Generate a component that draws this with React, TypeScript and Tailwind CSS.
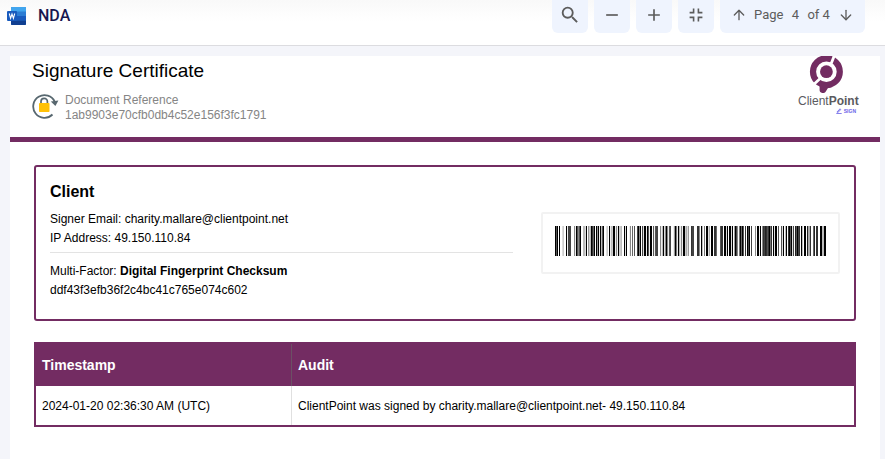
import { ArrowDown, ArrowUp } from "lucide-react";
import { MdAdd, MdRemove, MdSearch } from "react-icons/md";

/* One hex digit per bar column: 0 is black, f is white */
const BARCODE = [
  "050f0ffdcff0e444fff8e05850ffbbd0f9cb0360",
  "f090e0b50ffdcf0ebc00e8e0ccbff0d0ffe8f6f5",
  "ff4080f4d00e05e00f5e544ff8eb0d808e54ffe9",
  "07e0be8e00cad9ff344fff338f0bf7f00daf00f",
  "336fff533f00d0f00d0f9048f70605f3f040f4ff",
  "f8f00e0f8342353073f0d00f5ff5d0fb0f3050d4",
  "f25043f0bf00f2aa3ff62f33ff00bb00",
].join("");

const AUDIT = [
  {
    timestamp: "2024-01-20 02:36:30 AM (UTC)",
    audit: "ClientPoint was signed by charity.mallare@clientpoint.net- 49.150.110.84",
  },
];

function WordIcon() {
  return (
    <svg className="h-[18px] w-5 shrink-0" viewBox="0 0 20 18" aria-hidden="true">
      <rect x="4" y="0" width="15" height="18" rx="1" fill="#2b7cd3" />
      <path d="M5 0h13a1 1 0 0 1 1 1v3.5H4V1a1 1 0 0 1 1-1z" fill="#41a5ee" />
      <rect x="4" y="9" width="15" height="4.5" fill="#185abd" />
      <path d="M4 13.5h15V17a1 1 0 0 1-1 1H5a1 1 0 0 1-1-1z" fill="#103f91" />
      <rect x="0" y="4" width="10" height="10" rx="1" fill="#185abd" />
      <path d="M2.3 6.5 3.6 11.3 5 7 6.4 11.3 7.7 6.5" fill="none" stroke="#fff" strokeWidth="1.1" />
    </svg>
  );
}

function ShrinkIcon() {
  return (
    <svg className="h-[14px] w-[14px]" viewBox="0 0 14 14" fill="none" stroke="currentColor" strokeWidth="1.6" aria-hidden="true">
      <path d="M.6 4.6h4v-4M9.4.6v4h4M.6 9.4h4v4M13.4 9.4h-4v4" />
    </svg>
  );
}

function LockIcon() {
  return (
    <svg className="h-[26px] w-[27px] shrink-0" viewBox="0 0 27 26" fill="none" aria-hidden="true">
      <path d="M20.5 21.5A11.3 11.3 0 1 1 22.8 8.8" stroke="#57676f" strokeWidth="1.8" />
      <path d="M18.8 8.6 26.4 7.4 23.4 13z" fill="#57676f" />
      <path d="M9 11V8.5a3.2 3.2 0 0 1 6.4 0V11" stroke="#57676f" strokeWidth="1.7" />
      <rect x="7" y="10" width="10.5" height="9" rx="0.8" fill="#ffc107" />
    </svg>
  );
}

function ClientPointMark() {
  return (
    <svg className="h-[38px] w-[34px]" viewBox="0 0 34 38" aria-hidden="true">
      <circle cx="17.4" cy="15.7" r="13.4" fill="none" stroke="#732c62" strokeWidth="6.2" />
      <path d="M10.6 26.5 17 28 23.5 31 18.8 32.3 16.8 35.4C15.9 36.8 14.6 37.3 13.2 37c-1.7-.3-2.6-1.5-2.6-3z" fill="#732c62" />
      <circle cx="17.4" cy="15.7" r="6.4" fill="#732c62" />
      <path d="M21.4 9.5 25.2 0M12.7 21 5 28.2" stroke="#fff" strokeWidth="2.8" />
    </svg>
  );
}

function Logo() {
  return (
    <div className="flex w-[60px] flex-col items-start">
      <div className="pl-[11px]">
        <ClientPointMark />
      </div>
      <p className="text-[12px] leading-[14px] text-[#5b5b5f]">
        Client<span className="font-bold">Point</span>
      </p>
      <div className="flex items-center gap-[2px] self-end pr-[2px] text-[#6a63e8]">
        <svg className="h-[6px] w-[6px]" viewBox="0 0 6 6" fill="none" stroke="currentColor" aria-hidden="true">
          <path d="M1.2 3.8 4 .8l.8.8L2 4.3H1.2zM.3 5.6h5.4" strokeWidth="0.9" />
        </svg>
        <span className="text-[5px] leading-[4px] font-bold">SIGN</span>
      </div>
    </div>
  );
}

function Barcode() {
  return (
    <div className="shrink-0 rounded-[2px] border-2 border-[#f2f2f2] px-3 pt-3 pb-4">
      <svg
        className="block h-[30px] w-[271px]"
        viewBox={`0 0 ${BARCODE.length} 1`}
        preserveAspectRatio="none"
        shapeRendering="crispEdges"
        role="img"
        aria-label="Barcode"
      >
        {BARCODE.split("").map((c, i) => (
          <rect key={i} x={i} y="0" width="1" height="1" fill={`#${c}${c}${c}`} />
        ))}
      </svg>
    </div>
  );
}

const toolButton = "flex h-[33px] w-9 items-center justify-center rounded-b-md bg-[#eff4fe] pb-[3px] text-[#5c5c5c]";

function Toolbar() {
  return (
    <header className="flex h-[46px] items-start justify-between border-b border-[#dcdce0] bg-gradient-to-b from-[#f9f9f9] to-white to-50% pr-5 pl-[7px] font-['Roboto',sans-serif]">
      <div className="flex items-center gap-[11px] pt-1">
        <WordIcon />
        <h1 className="text-[16px] leading-6 font-medium text-[#17174f]">NDA</h1>
      </div>
      <div className="flex gap-[6px]">
        <button type="button" aria-label="Search" className={toolButton}>
          <MdSearch size={22} />
        </button>
        <button type="button" aria-label="Zoom out" className={toolButton}>
          <MdRemove size={20} />
        </button>
        <button type="button" aria-label="Zoom in" className={toolButton}>
          <MdAdd size={20} />
        </button>
        <button type="button" aria-label="Fit page" className={toolButton}>
          <ShrinkIcon />
        </button>
        <div className="flex h-[33px] w-[145px] items-center rounded-b-md bg-[#eff4fe] pb-[3px] pl-[11px] text-[13px] leading-5 text-[#5c5c5c]">
          <button type="button" aria-label="Previous page">
            <ArrowUp size={16} strokeWidth={2} />
          </button>
          <label htmlFor="page" className="ml-[7px]">
            Page
          </label>
          <input id="page" type="text" defaultValue="4" className="ml-1 w-4 text-center" />
          <span className="ml-1">of 4</span>
          <button type="button" aria-label="Next page" className="ml-2">
            <ArrowDown size={16} strokeWidth={2} />
          </button>
        </div>
      </div>
    </header>
  );
}

export default function App() {
  return (
    <div className="flex min-h-screen flex-col bg-[#f4f5fa] font-['Liberation_Sans',Arial,sans-serif] text-black">
      <Toolbar />

      <main className="mt-[10px] mr-[5px] ml-[10px] flex-1 bg-white">
        {/* Certificate heading */}
        <div className="flex h-[86px] items-start justify-between border-b-[5px] border-[#732c62] pr-[22px] pl-[22px]">
          <div>
            <h2 className="mt-[3px] text-[19px] leading-6">Signature Certificate</h2>
            <div className="mt-[10px] flex items-start gap-[6px]">
              <LockIcon />
              <p className="text-[12px] leading-[15px] text-[#858585]">
                Document Reference
                <br />
                1ab9903e70cfb0db4c52e156f3fc1791
              </p>
            </div>
          </div>
          <Logo />
        </div>

        <div className="pr-6 pl-6">
          {/* Signer */}
          <section className="mt-[23px] flex h-[156px] items-start justify-between rounded-[3px] border-2 border-[#732c62] pr-[14px] pl-[14px]">
            <div className="w-[463px] text-[12px] leading-[19px]">
              <h3 className="mt-[15px] text-[16px] leading-5 font-bold">Client</h3>
              <p className="mt-2">Signer Email: charity.mallare@clientpoint.net</p>
              <p>IP Address: 49.150.110.84</p>
              <hr className="mt-1 mb-[9px] border-[#e3e3e3]" />
              <p>
                Multi-Factor: <strong>Digital Fingerprint Checksum</strong>
              </p>
              <p>ddf43f3efb36f2c4bc41c765e074c602</p>
            </div>
            <div className="pt-[45px]">
              <Barcode />
            </div>
          </section>

          {/* Audit trail */}
          <table className="mt-[21px] w-full border-separate border-spacing-0 border-2 border-[#732c62] text-left">
            <thead>
              <tr className="h-[42px] bg-[#732c62] text-[14px] text-white">
                <th className="w-[256px] border-r border-[#6b5064] px-[6px]">Timestamp</th>
                <th className="px-[6px]">Audit</th>
              </tr>
            </thead>
            <tbody>
              {AUDIT.map((row) => (
                <tr key={row.timestamp} className="h-[39px] text-[12px]">
                  <td className="border-r border-[#e0e0e0] px-[6px]">{row.timestamp}</td>
                  <td className="px-[6px]">{row.audit}</td>
                </tr>
              ))}
            </tbody>
          </table>
        </div>
      </main>
    </div>
  );
}
